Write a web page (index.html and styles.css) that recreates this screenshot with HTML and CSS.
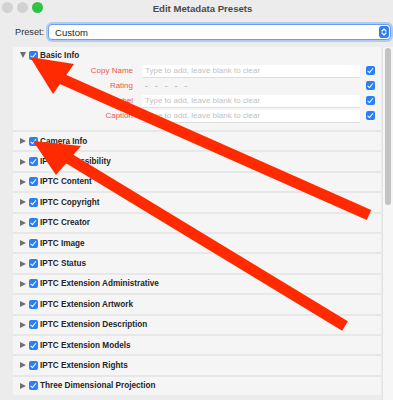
FILE: index.html
```html
<!DOCTYPE html>
<html lang="en">
<head>
    <meta charset="UTF-8">
    <meta name="viewport" content="width=device-width, initial-scale=1.0">
    <title>Edit Metadata Presets</title>
    <link rel="stylesheet" href="styles.css">
</head>
<body>
    <div class="window">
        <div class="titlebar">
            <div class="lights">
                <span class="light"></span>
                <span class="light"></span>
                <span class="light green"></span>
            </div>
            <div class="title">Edit Metadata Presets</div>
            <div></div>
        </div>

        <div class="preset-row">
            <span class="preset-label">Preset:</span>
            <div class="select">
                <span>Custom</span>
                <svg class="stepper" width="10" height="12" viewBox="0 0 10 12">
                    <rect width="10" height="12" rx="3" fill="#2b7ff5"/>
                    <path d="M3 5 L5 3 L7 5 M3 7 L5 9 L7 7" fill="none" stroke="#fff" stroke-width="1.2" stroke-linecap="round" stroke-linejoin="round"/>
                </svg>
            </div>
        </div>

        <div class="content">
            <div class="list">
                <div class="section open">
                    <div class="section-head"><span class="tri down"></span><span class="cb"></span><span class="name">Basic Info</span></div>
                    <div class="field"><span class="flabel">Copy Name</span><span class="input">Type to add, leave blank to clear</span><span class="cb"></span></div>
                    <div class="field"><span class="flabel">Rating</span><span class="rating">- - - - -</span><span class="cb"></span></div>
                    <div class="field"><span class="flabel">Label</span><span class="input">Type to add, leave blank to clear</span><span class="cb"></span></div>
                    <div class="field"><span class="flabel">Caption</span><span class="input">Type to add, leave blank to clear</span><span class="cb"></span></div>
                </div>
                <div class="section"><div class="section-head"><span class="tri"></span><span class="cb"></span><span class="name">Camera Info</span></div></div>
                <div class="section"><div class="section-head"><span class="tri"></span><span class="cb"></span><span class="name">IPTC Accessibility</span></div></div>
                <div class="section"><div class="section-head"><span class="tri"></span><span class="cb"></span><span class="name">IPTC Content</span></div></div>
                <div class="section"><div class="section-head"><span class="tri"></span><span class="cb"></span><span class="name">IPTC Copyright</span></div></div>
                <div class="section"><div class="section-head"><span class="tri"></span><span class="cb"></span><span class="name">IPTC Creator</span></div></div>
                <div class="section"><div class="section-head"><span class="tri"></span><span class="cb"></span><span class="name">IPTC Image</span></div></div>
                <div class="section"><div class="section-head"><span class="tri"></span><span class="cb"></span><span class="name">IPTC Status</span></div></div>
                <div class="section"><div class="section-head"><span class="tri"></span><span class="cb"></span><span class="name">IPTC Extension Administrative</span></div></div>
                <div class="section"><div class="section-head"><span class="tri"></span><span class="cb"></span><span class="name">IPTC Extension Artwork</span></div></div>
                <div class="section"><div class="section-head"><span class="tri"></span><span class="cb"></span><span class="name">IPTC Extension Description</span></div></div>
                <div class="section"><div class="section-head"><span class="tri"></span><span class="cb"></span><span class="name">IPTC Extension Models</span></div></div>
                <div class="section"><div class="section-head"><span class="tri"></span><span class="cb"></span><span class="name">IPTC Extension Rights</span></div></div>
                <div class="section"><div class="section-head"><span class="tri"></span><span class="cb"></span><span class="name">Three Dimensional Projection</span></div></div>
            </div>
            <div class="scrollbar"><div class="thumb"></div></div>
        </div>

        <!-- annotation arrows drawn over the dialog -->
        <svg class="arrows" width="393" height="400" viewBox="0 0 393 400">
            <line x1="62" y1="79" x2="369" y2="215" stroke="#ff2a00" stroke-width="11"/>
            <polygon points="30,57 74,64 53,94" fill="#ff2a00"/>
            <line x1="68" y1="158" x2="345" y2="326" stroke="#ff2a00" stroke-width="11"/>
            <polygon points="33,141 81,146 56,175" fill="#ff2a00"/>
        </svg>
    </div>
</body>
</html>
```

FILE: styles.css
```css
body {
    margin: 0;
    padding: 0;
    background-color: #ececec;
    font-family: 'Liberation Sans', Arial, sans-serif;
    color: #222;
}

.window {
    position: relative;
    width: 393px;
    height: 400px;
    overflow: hidden;
    background-color: #ececec;
}

.titlebar {
    height: 17px;
    display: grid;
    grid-template-columns: 1fr auto 1fr;
    align-items: center;
    padding-left: 12px;
    box-sizing: border-box;
}

.lights {
    display: flex;
    gap: 4px;
    margin-left: -10px;
    margin-top: -2px;
}

.light {
    width: 11px;
    height: 11px;
    border-radius: 50%;
    background-color: #d2d2d2;
}

.light.green {
    background-color: #2cc443;
}

.title {
    font-size: 9.6px;
    font-weight: bold;
    color: #4b4b4b;
    margin-top: -1px;
}

.preset-row {
    display: flex;
    align-items: center;
    gap: 4px;
    margin-top: 7px;
    padding-left: 15px;
    height: 16px;
}

.preset-label {
    font-size: 9.2px;
    color: #333;
}

.select {
    flex: 1;
    height: 14px;
    margin-right: 2px;
    display: flex;
    align-items: center;
    justify-content: space-between;
    padding: 0 1px 0 6px;
    background-color: #fff;
    border: 1px solid #6c9cec;
    border-radius: 4px;
    box-shadow: 0 0 0 2px #b2cbf4;
    font-size: 9.5px;
    color: #222;
}

.content {
    display: flex;
    margin-top: 7px;
    height: 353px;
}

.list {
    width: 369px;
    margin-left: 13px;
    display: flex;
    flex-direction: column;
    gap: 2px;
    background-color: #e7e7e7;
    align-self: flex-start;
}

.section {
    background-color: #f5f5f5;
    height: 18.4px;
}

.section.open {
    height: 83px;
    box-sizing: border-box;
    padding-bottom: 7px;
}

.section-head {
    display: flex;
    align-items: center;
    height: 18.4px;
    padding-left: 7px;
}

.section.open .section-head {
    height: 16px;
}

.tri {
    width: 0;
    height: 0;
    border-left: 6px solid #717171;
    border-top: 3.5px solid transparent;
    border-bottom: 3.5px solid transparent;
    margin-right: 3px;
}

.tri.down {
    border-left: 3.5px solid transparent;
    border-right: 3.5px solid transparent;
    border-top: 6px solid #6a6a6a;
    border-bottom: 0;
    margin-right: 3px;
}

.cb {
    position: relative;
    width: 9px;
    height: 9px;
    border-radius: 2px;
    background-color: #2a7ff6;
    flex-shrink: 0;
}

.cb::after {
    content: '';
    position: absolute;
    left: 3px;
    top: 1px;
    width: 2px;
    height: 4.5px;
    border: solid #fff;
    border-width: 0 1.4px 1.4px 0;
    transform: rotate(40deg);
}

.name {
    margin-left: 2px;
    font-size: 8.2px;
    font-weight: bold;
    color: #262626;
}

.field {
    display: flex;
    align-items: center;
    height: 15px;
}

.flabel {
    width: 120px;
    text-align: right;
    font-size: 8px;
    color: #ec5a48;
    margin-right: 9px;
}

.input {
    width: 218px;
    height: 12px;
    line-height: 12px;
    box-sizing: border-box;
    padding-left: 3px;
    background-color: #fff;
    box-shadow: 0 1px 0 #dedede;
    font-size: 8px;
    color: #c2c2c2;
    margin-right: 6px;
}

.rating {
    width: 218px;
    box-sizing: border-box;
    padding-left: 3px;
    font-size: 8px;
    letter-spacing: 2.5px;
    color: #8a8a8a;
    margin-right: 6px;
}

.scrollbar {
    width: 10px;
    margin-left: 1px;
    background-color: #f6f6f6;
    border-left: 1px solid #e3e3e3;
    padding-top: 1px;
}

.thumb {
    width: 6px;
    height: 157px;
    margin-left: 2px;
    border-radius: 3px;
    background-color: #c3c3c3;
}

.arrows {
    position: absolute;
    top: 0;
    left: 0;
    pointer-events: none;
}
```
